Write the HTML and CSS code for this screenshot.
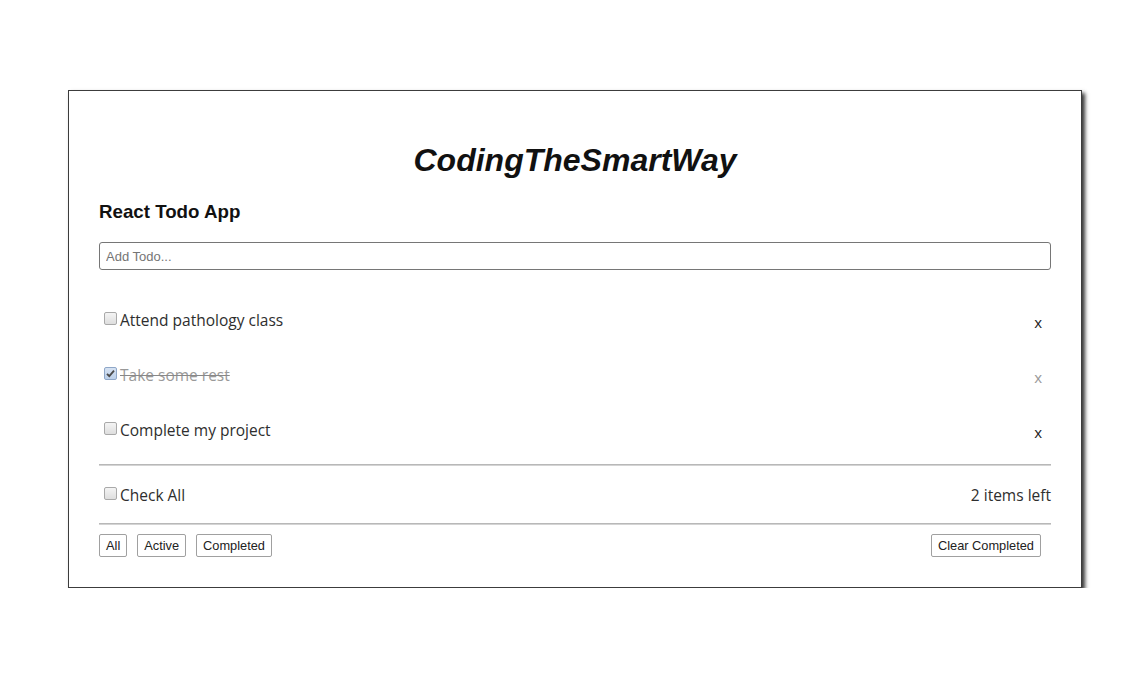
FILE: index.html
```html
<!DOCTYPE html>
<html lang="en">
<head>
<meta charset="utf-8">
<title>React Todo App</title>
<link rel="stylesheet" href="styles.css">
</head>
<body>
<div class="card">
  <h1 class="brand">CodingTheSmartWay</h1>
  <h3 class="app-title">React Todo App</h3>
  <input class="add-input" type="text" placeholder="Add Todo...">
  <ul class="todo-list">
    <li class="todo">
      <label class="todo-label"><span class="box" role="checkbox" aria-checked="false"></span>Attend pathology class</label>
      <span class="remove">x</span>
    </li>
    <li class="todo done">
      <label class="todo-label"><span class="box checked" role="checkbox" aria-checked="true"><svg viewBox="0 0 13 13" width="13" height="13"><path d="M3 6.8 L5.3 9.2 L10 3.6" fill="none" stroke="#4a4a4a" stroke-width="1.8"/></svg></span><span class="strike">Take some rest</span></label>
      <span class="remove">x</span>
    </li>
    <li class="todo">
      <label class="todo-label"><span class="box" role="checkbox" aria-checked="false"></span>Complete my project</label>
      <span class="remove">x</span>
    </li>
  </ul>
  <hr class="rule rule-first">
  <div class="summary">
    <label class="todo-label"><span class="box" role="checkbox" aria-checked="false"></span>Check All</label>
    <span class="count">2 items left</span>
  </div>
  <hr class="rule">
  <div class="filters">
    <div class="filter-group">
      <button class="btn">All</button>
      <button class="btn">Active</button>
      <button class="btn">Completed</button>
    </div>
    <button class="btn clear">Clear Completed</button>
  </div>
</div>
</body>
</html>
```

FILE: styles.css
```css
html, body {
  margin: 0;
  padding: 0;
  background: #fff;
}

body {
  padding: 90px 52px 0 68px;
  font-family: "Liberation Sans", Arial, sans-serif;
  color: #111;
}

.card {
  border: 1px solid #3c3c3c;
  box-shadow: 3px 3px 4px rgba(0, 0, 0, 0.8);
  padding: 30px;
  background: #fff;
}

.brand {
  margin: 21.44px 0;
  font-size: 32px;
  line-height: 37px;
  font-style: italic;
  font-weight: bold;
  text-align: center;
  color: #111;
}

.app-title {
  margin: 18.72px 0 19.72px;
  font-size: 18.72px;
  line-height: 21.5px;
  font-weight: bold;
  color: #111;
}

.add-input {
  display: block;
  box-sizing: border-box;
  width: 100%;
  height: 28px;
  margin: 0;
  padding: 0 6px;
  border: 1px solid #767676;
  border-radius: 3px;
  font-family: "Liberation Sans", Arial, sans-serif;
  font-size: 13px;
  color: #222;
}

.add-input::placeholder {
  color: #757575;
}

.todo-list {
  list-style: none;
  margin: 23px 0 0;
  padding: 0;
}

.todo {
  height: 55px;
  display: flex;
  align-items: center;
  justify-content: space-between;
  font-family: "Open Sans", "Noto Sans", sans-serif;
  font-size: 15.5px;
  line-height: 21px;
  color: #2e2e2e;
}

.todo-label {
  font-family: "Open Sans", "Noto Sans", sans-serif;
  font-size: 15.5px;
  line-height: 21px;
  color: #2e2e2e;
}

.box {
  display: inline-block;
  box-sizing: border-box;
  width: 13px;
  height: 13px;
  margin: 0 3px 0 5px;
  vertical-align: 1px;
  border: 1px solid #a9a9a9;
  border-radius: 2px;
  background: linear-gradient(#f4f4f4, #dedede);
}

.box svg {
  display: block;
  margin: -1px;
}

.box.checked {
  border-color: #8fa7c8;
  background: linear-gradient(#d6e2f2, #bcd0ea);
}

.done .strike {
  color: #999;
  text-decoration: line-through;
  text-decoration-color: #888;
}

.remove {
  margin-right: 9px;
  padding-top: 4px;
  font-family: "Open Sans", "Noto Sans", sans-serif;
  font-size: 15px;
  color: #222;
}

.done .remove {
  color: #999;
}

.rule {
  margin: 0;
  height: 0;
  border: none;
  border-top: 1px solid #b8b8b8;
  border-bottom: 1px solid #d4d4d4;
}

.rule-first {
  margin-top: 6px;
}

.summary {
  box-sizing: border-box;
  height: 57px;
  padding-top: 2px;
  display: flex;
  align-items: center;
  justify-content: space-between;
}

.count {
  font-family: "Open Sans", "Noto Sans", sans-serif;
  font-size: 15.5px;
  line-height: 21px;
  color: #2e2e2e;
}

.filters {
  margin-top: 9px;
  display: flex;
  justify-content: space-between;
  align-items: center;
}

.filter-group {
  display: flex;
  gap: 10px;
}

.btn {
  box-sizing: border-box;
  height: 23px;
  margin: 0;
  padding: 0 6px;
  border: 1px solid #a0a0a0;
  border-radius: 2px;
  background: #fff;
  font-family: "Liberation Sans", Arial, sans-serif;
  font-size: 12.8px;
  color: #222;
}

.clear {
  margin-right: 10px;
}
```
